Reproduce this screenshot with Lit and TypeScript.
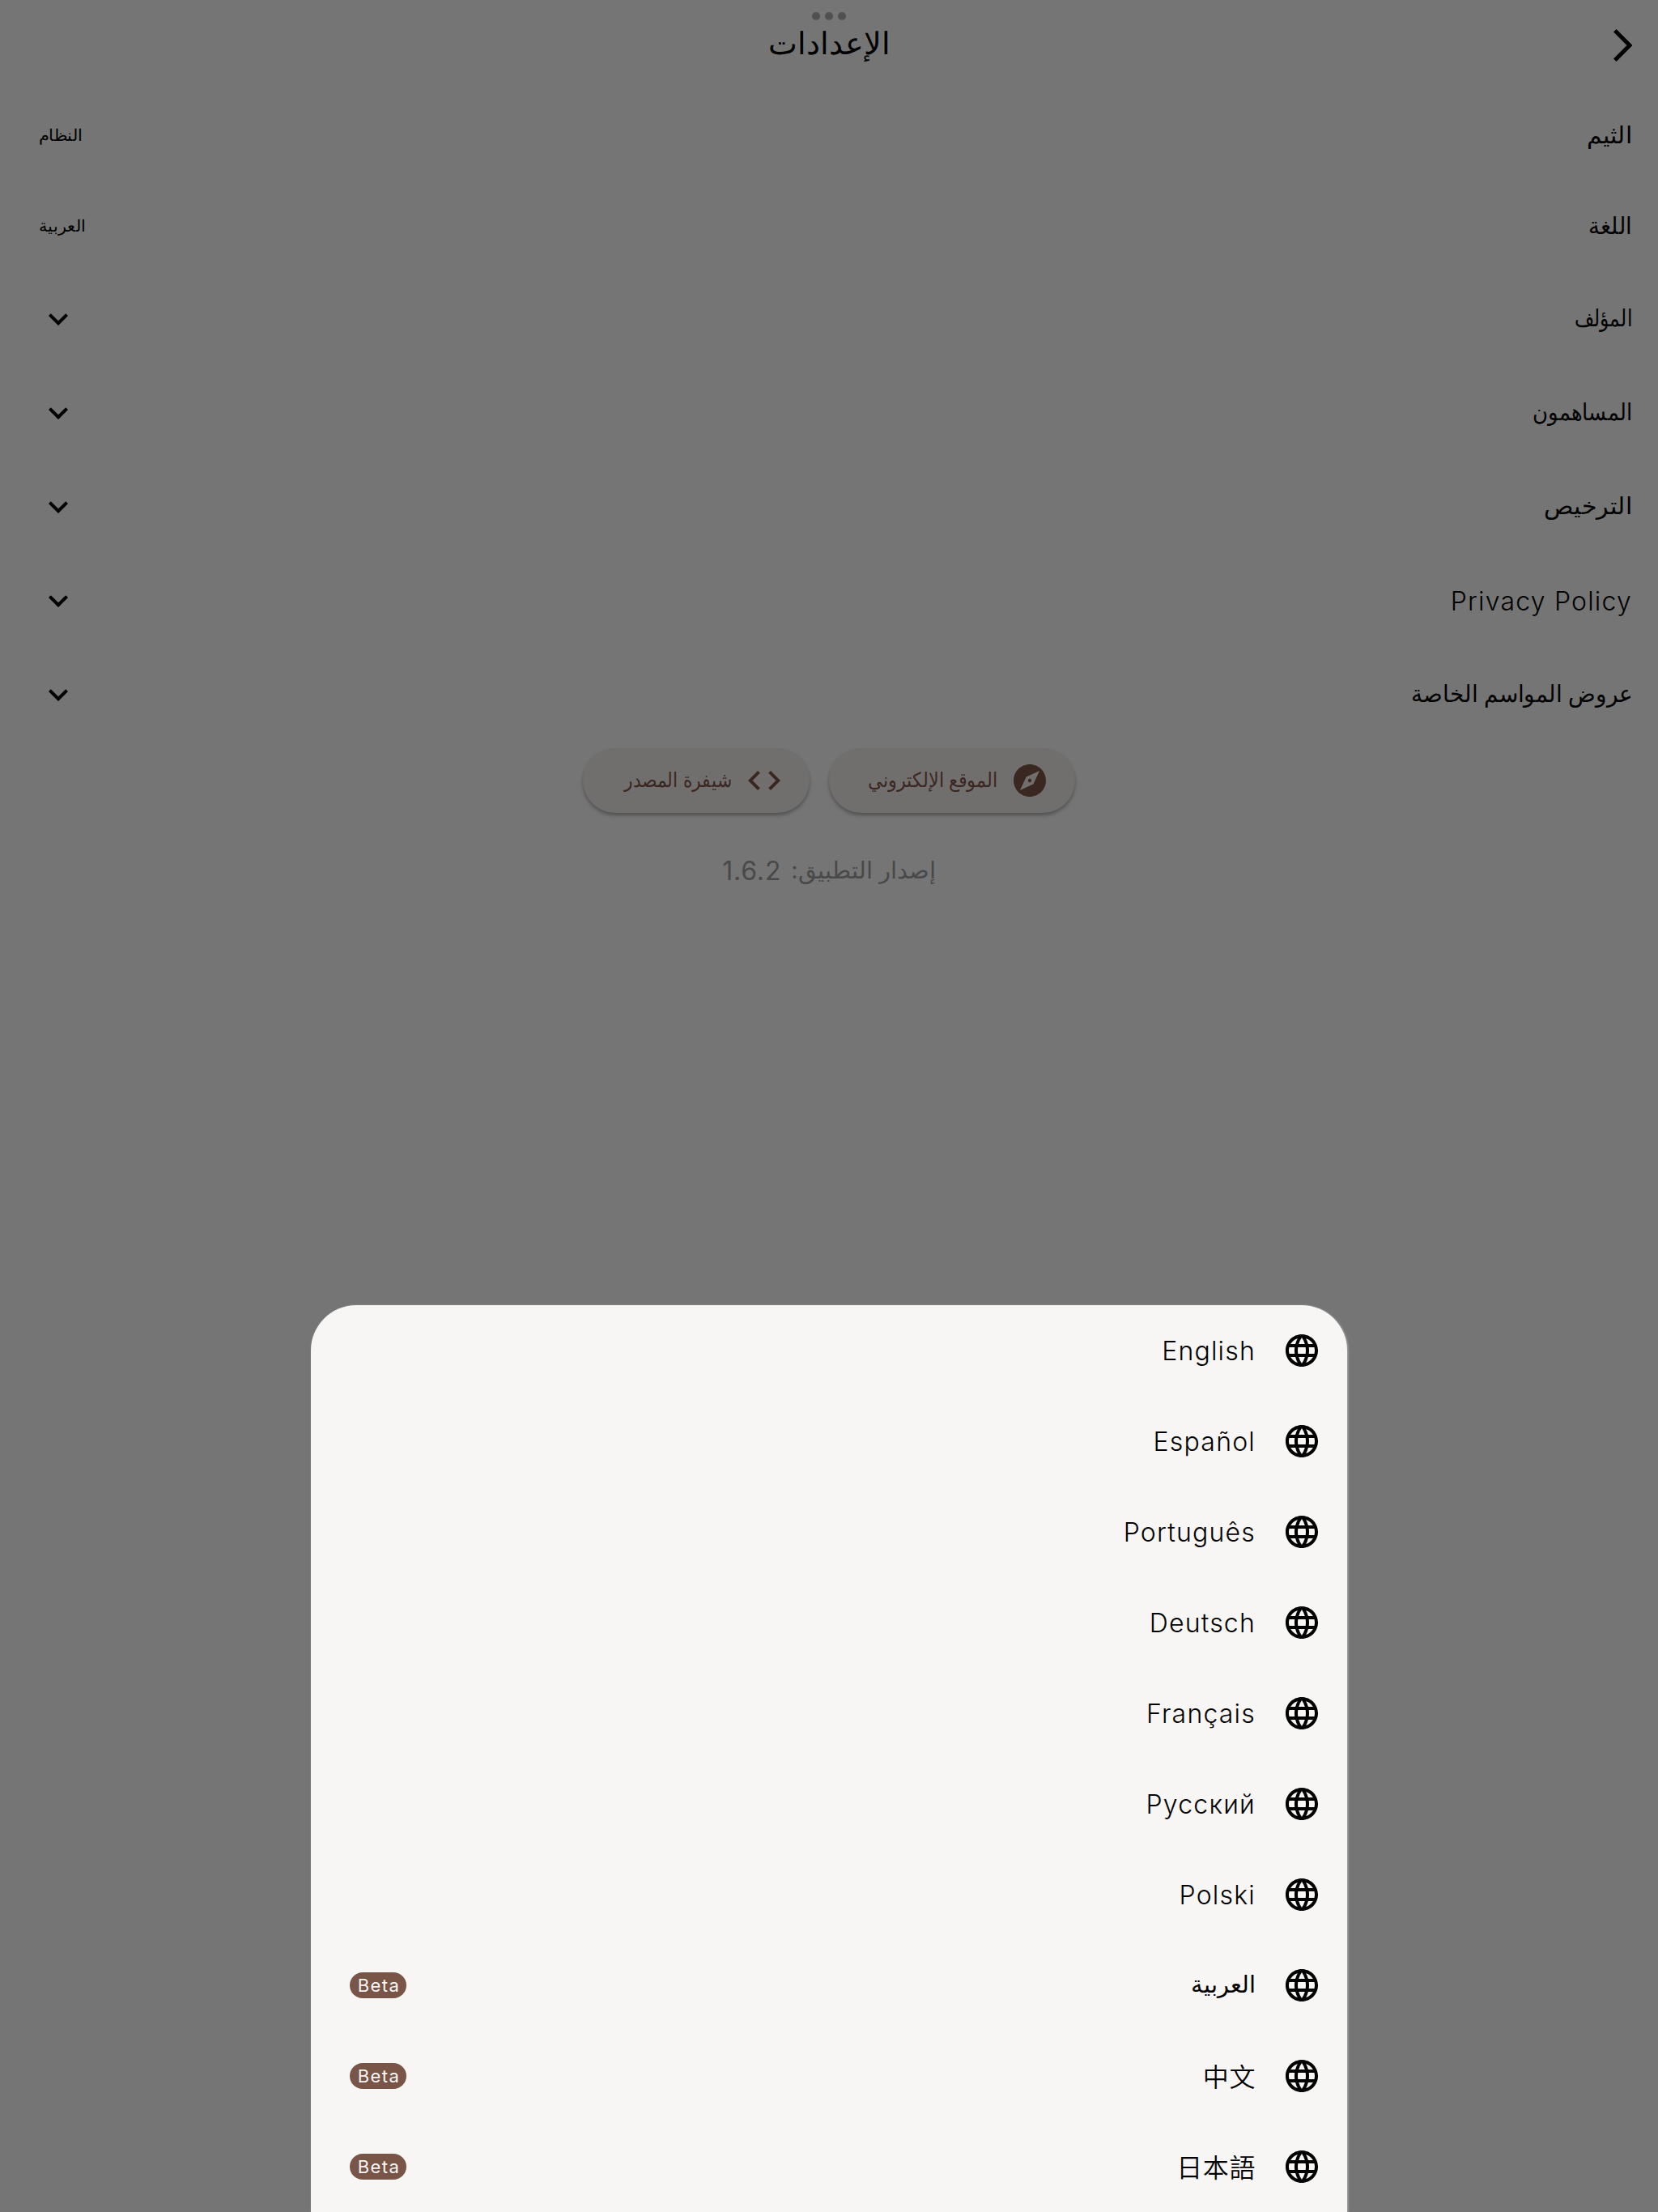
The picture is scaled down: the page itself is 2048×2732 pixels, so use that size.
import { LitElement, html, css } from "lit";
import { customElement } from "lit/decorators.js";
import { styleMap } from "lit/directives/style-map.js";

const chevronDown = html`<svg class="icon" viewBox="0 0 24 24"><path d="M7.41 8.59 12 13.17l4.59-4.58L18 10l-6 6-6-6z" fill="currentColor"/></svg>`;
const globe = html`<svg class="icon" viewBox="0 0 24 24"><path fill="currentColor" d="M11.99 2C6.47 2 2 6.48 2 12s4.47 10 9.99 10C17.52 22 22 17.52 22 12S17.52 2 11.99 2zm6.93 6h-2.95c-.32-1.25-.78-2.45-1.38-3.56 1.84.63 3.37 1.91 4.33 3.56zM12 4.04c.83 1.2 1.48 2.53 1.91 3.96h-3.82c.43-1.43 1.08-2.76 1.91-3.96zM4.26 14C4.1 13.36 4 12.69 4 12s.1-1.36.26-2h3.38c-.08.66-.14 1.32-.14 2 0 .68.06 1.34.14 2H4.26zm.82 2h2.95c.32 1.25.78 2.45 1.38 3.56-1.84-.63-3.37-1.9-4.33-3.56zm2.95-8H5.08c.96-1.66 2.49-2.93 4.33-3.56C8.81 5.55 8.35 6.75 8.03 8zM12 19.96c-.83-1.2-1.48-2.53-1.91-3.96h3.82c-.43 1.43-1.08 2.76-1.91 3.96zM14.34 14H9.66c-.09-.66-.16-1.32-.16-2 0-.68.07-1.35.16-2h4.68c.09.65.16 1.32.16 2 0 .68-.07 1.34-.16 2zm.25 5.56c.6-1.11 1.06-2.31 1.38-3.56h2.95c-.96 1.65-2.49 2.93-4.33 3.56zM16.36 14c.08-.66.14-1.32.14-2 0-.68-.06-1.34-.14-2h3.38c.16.64.26 1.31.26 2s-.1 1.36-.26 2h-3.38z"/></svg>`;

interface Label { text: string; fit?: number }

const values: { label: Label; value: Label }[] = [
  { label: { text: "الثيم", fit: 1.03 }, value: { text: "النظام", fit: 1.04 } },
  { label: { text: "اللغة", fit: 0.95 }, value: { text: "العربية", fit: 1.04 } },
];
const sections: Label[] = [
  { text: "المؤلف", fit: 0.81 },
  { text: "المساهمون", fit: 0.895 },
  { text: "الترخيص", fit: 1.04 },
  { text: "Privacy Policy" },
  { text: "عروض المواسم الخاصة", fit: 0.962 },
];
const languages = [
  { name: "English" }, { name: "Español" }, { name: "Português" }, { name: "Deutsch" },
  { name: "Français" }, { name: "Русский" }, { name: "Polski" },
  { name: "العربية", beta: true }, { name: "中文", beta: true }, { name: "日本語", beta: true },
];
const scriptOf = (s: string) =>
  /[\u0600-\u06ff]/.test(s) ? "ar" : /[\u4e00-\u9fff]/.test(s) ? "cjk" : "lat";
// `fit` condenses or widens a label horizontally from its anchored edge.
const label = ({ text, fit = 1 }: Label, extra = "") =>
  html`<span class="${scriptOf(text)} ${extra}" style=${styleMap(fit === 1 ? {} : { transform: `scaleX(${fit})` })}>${text}</span>`;

@customElement("app-root")
export class AppRoot extends LitElement {
  static styles = css`
    :host { display: block; position: relative; width: 2048px; height: 2732px; overflow: hidden; background: #757575; color: #000; font-family: Inter, "Noto Sans CJK SC", sans-serif; font-size: 32px; direction: rtl; }
    * { box-sizing: border-box; }
    .icon { width: 48px; height: 48px; display: block; flex: none; }
    .dots { position: absolute; top: 15px; left: 1003px; display: flex; gap: 6px; }
    .dot { width: 10px; height: 10px; border-radius: 50%; background: #505050; }
    .bar { height: 112px; display: grid; grid-template-columns: 1fr auto 1fr; align-items: center; padding: 0 32px; }
    .back { width: 23px; height: 40px; display: block; }
    .lat { font-weight: 360; letter-spacing: 1.2px; margin-left: -1.2px; padding-top: 1px; }
    .cjk { font-family: "Noto Sans CJK SC", sans-serif; font-weight: 350; font-size: 32px; letter-spacing: .6px; margin-left: -.6px; padding-bottom: 3px; }
    .ar { white-space: nowrap; font-size: 29px; padding-bottom: 3px; transform-origin: right center; }
    .ar.title { font-size: 38px; padding-bottom: 7px; }
    .row { display: flex; align-items: center; justify-content: space-between; height: 112px; padding: 0 32px 0 48px; }
    .row.tile { height: 116px; }
    .ar.value { font-size: 20px; transform-origin: left center; padding-bottom: 2px; }
    .buttons { display: flex; justify-content: center; gap: 24px; padding-top: 8px; }
    .btn { display: flex; align-items: center; gap: 16px; height: 80px; border-radius: 40px; padding: 0 32px 0 48px; background: #716f6d; color: #3b2721; box-shadow: 0 3px 4px rgba(0,0,0,.3); }
    .btn.site { width: 304px; }
    .btn.code { width: 280px; }
    .ar.action { font-size: 25px; padding-bottom: 2px; }
    .version { display: flex; justify-content: center; align-items: center; gap: 12px; color: #494949; height: 48px; margin-top: 48px; }
    .number { letter-spacing: .8px; padding-bottom: 2px; }
    .sheet { position: absolute; left: 384px; top: 1612px; width: 1280px; height: 1120px; background: #f7f6f4; border-radius: 56px 56px 0 0; box-shadow: 1px 1px 3px rgba(247,246,244,.5); }
    .lang { display: flex; align-items: center; height: 112px; padding: 0 32px 0 48px; gap: 33px; }
    .beta { margin-right: auto; width: 70px; height: 32px; border-radius: 16px; background: #795548; color: #f7f6f4; font-size: 22px; letter-spacing: 1.4px; padding-left: 2px; display: flex; align-items: center; justify-content: center; direction: ltr; }
  `;
  render() {
    return html`
      <div class="dots"><div class="dot"></div><div class="dot"></div><div class="dot"></div></div>
      <header class="bar">
        <svg class="back" viewBox="0 0 23 40"><path d="M1.8 1.8 20 20 1.8 38.2" fill="none" stroke="currentColor" stroke-width="5"/></svg>
        ${label({ text: "الإعدادات" }, "title")}
      </header>
      ${values.map(v => html`<div class="row">${label(v.label)}${label(v.value, "value")}</div>`)}
      ${sections.map(s => html`<div class="row tile">${label(s)}${chevronDown}</div>`)}
      <div class="buttons">
        <div class="btn site"><svg class="icon" viewBox="0 0 24 24"><path fill="currentColor" d="M12 10.9c-.61 0-1.1.49-1.1 1.1s.49 1.1 1.1 1.1c.61 0 1.1-.49 1.1-1.1s-.49-1.1-1.1-1.1zM12 2C6.48 2 2 6.48 2 12s4.48 10 10 10 10-4.48 10-10S17.52 2 12 2zm2.19 12.19L6 18l3.81-8.19L18 6l-3.81 8.19z"/></svg>${label({ text: "الموقع الإلكتروني", fit: 0.895 }, "action")}</div>
        <div class="btn code"><svg class="icon" viewBox="0 0 24 24"><path fill="currentColor" d="M9.4 16.6 4.8 12l4.6-4.6L8 6l-6 6 6 6 1.4-1.4zm5.2 0 4.6-4.6-4.6-4.6L16 6l6 6-6 6-1.4-1.4z"/></svg>${label({ text: "شيفرة المصدر", fit: 0.875 }, "action")}</div>
      </div>
      <div class="version">${label({ text: "إصدار التطبيق:" })}<span class="number">1.6.2</span></div>
      <div class="sheet">
        ${languages.map(l => html`<div class="lang">${globe}${label({ text: l.name })}${l.beta ? html`<span class="beta">Beta</span>` : null}</div>`)}
      </div>`;
  }
}
